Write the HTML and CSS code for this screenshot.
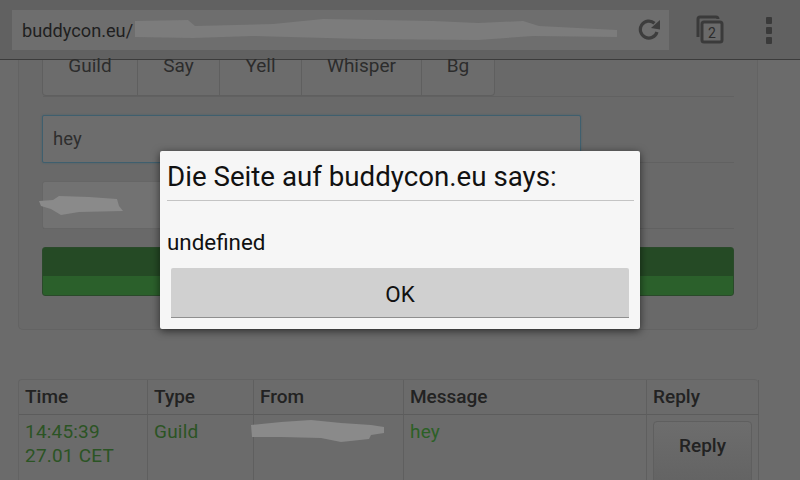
FILE: index.html
```html
<!DOCTYPE html>
<html lang="de">
<head>
<meta charset="UTF-8">
<meta name="viewport" content="width=device-width, initial-scale=1.0">
<title>buddycon.eu</title>
<link rel="stylesheet" href="styles.css">
</head>
<body>

<header class="toolbar">
  <div class="url-bar">
    <span class="url-text">buddycon.eu/</span>
    <svg class="url-smear" width="486" height="24" viewBox="0 0 486 24">
      <path d="M2 3 L55 2 L62 8 L140 6 L190 1 L300 3 L345 5 L390 3 L406 8 L484 12 L484 19 L400 18 L345 22 L230 21 L120 18 L60 20 L2 19 Z" fill="#7c7c7c"/>
    </svg>
    <svg class="reload-icon" width="24" height="24" viewBox="0 0 24 24">
      <path d="M19 14 A8.5 8.5 0 1 1 16.5 5.2" fill="none" stroke="#3d3d3d" stroke-width="3.2"/>
      <path d="M22 2 L22 11.5 L13 10 Z" fill="#3d3d3d"/>
    </svg>
  </div>
  <svg class="tabs-icon" width="30" height="30" viewBox="0 0 30 30">
    <path d="M3 22 V4 Q3 2 5 2 H21 Q23 2 23 4" fill="none" stroke="#3a3a3a" stroke-width="3"/>
    <rect x="7" y="7" width="20" height="20" rx="2" fill="#6a6a6a" stroke="#3a3a3a" stroke-width="3"/>
    <text x="17" y="22.5" class="tabs-count">2</text>
  </svg>
  <div class="menu-dots"><i></i><i></i><i></i></div>
</header>

<main class="page">
  <section class="well">
    <nav class="tab-row">
      <a class="tab tab-guild">Guild</a>
      <a class="tab tab-say">Say</a>
      <a class="tab tab-yell">Yell</a>
      <a class="tab tab-whisper">Whisper</a>
      <a class="tab tab-bg">Bg</a>
    </nav>
    <div class="form-row row-input">
      <div class="text-input">hey</div>
    </div>
    <div class="form-row row-select">
      <div class="select-box">
        <svg class="select-smear" width="86" height="22" viewBox="0 0 86 22">
          <path d="M0 7 L14 6 L20 2 L50 3 L78 5 L80 12 L84 17 L40 18 L22 21 L12 15 L2 12 Z" fill="#8a8a8a"/>
        </svg>
      </div>
    </div>
    <div class="send-button"></div>
  </section>

  <section class="log-table">
    <div class="cell head">Time</div>
    <div class="cell head">Type</div>
    <div class="cell head">From</div>
    <div class="cell head">Message</div>
    <div class="cell head">Reply</div>
    <div class="cell msg">14:45:39<br>27.01 CET</div>
    <div class="cell msg">Guild</div>
    <div class="cell from-cell">
      <svg width="134" height="26" viewBox="0 0 134 26">
        <path d="M0 6 L30 3 L60 1 L90 4 L120 6 L133 8 L133 14 L120 16 L118 20 L90 23 L70 19 L30 18 L1 18 Z" fill="#8a8a8a"/>
      </svg>
    </div>
    <div class="cell msg msg-bright">hey</div>
    <div class="cell reply-cell"><div class="reply-button">Reply</div></div>
  </section>
</main>

<div class="dialog">
  <h2 class="dialog-title">Die Seite auf buddycon.eu says:</h2>
  <p class="dialog-text">undefined</p>
  <button class="dialog-ok">OK</button>
</div>

</body>
</html>
```

FILE: styles.css
```css
html, body {
  margin: 0;
  height: 100%;
}

body {
  width: 800px;
  height: 480px;
  overflow: hidden;
  position: relative;
  font-family: Roboto, "Liberation Sans", sans-serif;
  background-color: #6b6b6b;
  color: #262626;
}

/* browser bar */
.toolbar {
  height: 59px;
  box-sizing: content-box;
  border-bottom: 1px solid #3c3c3c;
  background-color: #616161;
  display: flex;
  align-items: flex-start;
}

.url-bar {
  width: 657px;
  height: 40px;
  margin: 10px 0 0 12px;
  background-color: #6e6e6e;
  display: flex;
  align-items: center;
  font-size: 18.2px;
  color: #1f1f1f;
}

.url-text {
  padding-left: 10px;
}

.url-smear {
  flex-shrink: 0;
}

.reload-icon {
  margin-left: 19px;
  flex-shrink: 0;
}

.tabs-icon {
  flex-shrink: 0;
  margin: 15px 0 0 26px;
}

.tabs-count {
  font-size: 14px;
  font-family: Roboto, sans-serif;
  fill: #2c2c2c;
  text-anchor: middle;
}

.menu-dots {
  margin: 17px 0 0 41px;
  display: flex;
  flex-direction: column;
  gap: 3px;
}

.menu-dots i {
  display: block;
  width: 6px;
  height: 7px;
  background-color: #3a3a3a;
  border-radius: 1px;
}

/* page under the dialog */
.page {
  padding: 0 42px 0 18px;
}

.well {
  height: 270px;
  box-sizing: border-box;
  padding: 0 24px;
  background-color: #696969;
  border: 1px solid #636363;
  border-top: none;
  border-radius: 0 0 5px 5px;
}

.tab-row {
  display: flex;
  height: 36px;
  border-bottom: 1px solid #616161;
  margin-right: -1px;
}

.tab {
  height: 36px;
  box-sizing: border-box;
  text-align: center;
  font-size: 19px;
  line-height: 12px;
  border-right: 1px solid #5f5f5f;
  border-bottom: 1px solid #5f5f5f;
  background-color: #6c6c6c;
  color: #2c2c2c;
}

.tab-guild {
  width: 96px;
  margin-left: -1px;
  border-left: 1px solid #5f5f5f;
  border-radius: 0 0 0 4px;
}
.tab-say { width: 82px; }
.tab-yell { width: 82px; }
.tab-whisper { width: 120px; }
.tab-bg { width: 73px; border-radius: 0 0 4px 0; }

.form-row {
  border-bottom: 1px solid #616161;
  margin-right: -1px;
}

.row-input {
  height: 66px;
  box-sizing: border-box;
  padding-top: 18px;
}

.text-input {
  width: 539px;
  margin-left: -1px;
  height: 48px;
  box-sizing: border-box;
  border: 1px solid #3f5f6e;
  border-radius: 2px;
  box-shadow: 0 0 2px #47606b;
  background-color: #6d6d6d;
  padding-left: 10px;
  font-size: 18.5px;
  line-height: 46px;
  color: #2e2e2e;
}

.row-select {
  height: 66px;
  box-sizing: border-box;
  padding-top: 18px;
}

.select-box {
  width: 130px;
  margin-left: -1px;
  height: 48px;
  box-sizing: border-box;
  background-color: #727272;
  border: 1px solid #666;
  border-radius: 3px;
  position: relative;
}

.select-smear {
  position: absolute;
  left: -4px;
  top: 12px;
}

.send-button {
  margin-top: 18px;
  margin-left: -1px;
  width: 692px;
  height: 49px;
  border-radius: 3px;
  border: 1px solid #2a4a2a;
  box-sizing: border-box;
  background: linear-gradient(#254a25 0, #254a25 60%, #2b602b 60%, #2b602b 100%);
}

/* message table */
.log-table {
  margin-top: 49px;
  display: grid;
  grid-template-columns: 129px 106px 150px 243px 112px;
  grid-template-rows: 35px 80px;
  border-top: 1px solid #636363;
  border-left: 1px solid #636363;
  border-radius: 4px 4px 0 0;
}

.cell {
  box-sizing: border-box;
  padding: 5px 6px 0 6px;
  font-size: 19px;
  line-height: 24px;
  border-right: 1px solid #5f5f5f;
}

.head {
  font-weight: 500;
  border-bottom: 1px solid #5c5c5c;
  color: #222;
}

.msg {
  color: #2b5424;
  letter-spacing: 0.2px;
}

.msg-bright {
  color: #2c6026;
}

.from-cell {
  padding: 4px 0 0 0;
}

.from-cell svg {
  display: block;
  margin-left: -3px;
}

.reply-cell {
  padding: 6px 6px 0 6px;
}

.reply-button {
  height: 70px;
  box-sizing: border-box;
  border: 1px solid #5f5f5f;
  border-radius: 4px;
  background: linear-gradient(#6d6d6d, #626262);
  font-weight: 500;
  font-size: 19px;
  text-align: center;
  padding-top: 12px;
  color: #222;
}

/* alert box, sits over the page */
.dialog {
  position: absolute;
  left: 160px;
  top: 151px;
  width: 480px;
  height: 178px;
  box-sizing: border-box;
  padding: 0 6px 0 7px;
  background-color: #f6f6f6;
  border-radius: 2px;
  box-shadow: 0 2px 8px rgba(0, 0, 0, 0.6);
  color: #111;
}

.dialog-title {
  margin: 0;
  height: 50px;
  box-sizing: border-box;
  padding-top: 10px;
  font-size: 27.7px;
  line-height: 32px;
  font-weight: 400;
  white-space: nowrap;
  border-bottom: 1px solid #c4c4c4;
}

.dialog-text {
  margin: 0;
  padding-top: 28px;
  font-size: 22.4px;
  line-height: 26px;
}

.dialog-ok {
  display: block;
  margin: 13px 4px 0 4px;
  width: 458px;
  height: 50px;
  padding-top: 3px;
  border: none;
  border-bottom: 1px solid #8f8f8f;
  border-radius: 2px 2px 0 0;
  background-color: #d0d0d0;
  font-family: inherit;
  font-size: 22.4px;
  color: #111;
}
```
